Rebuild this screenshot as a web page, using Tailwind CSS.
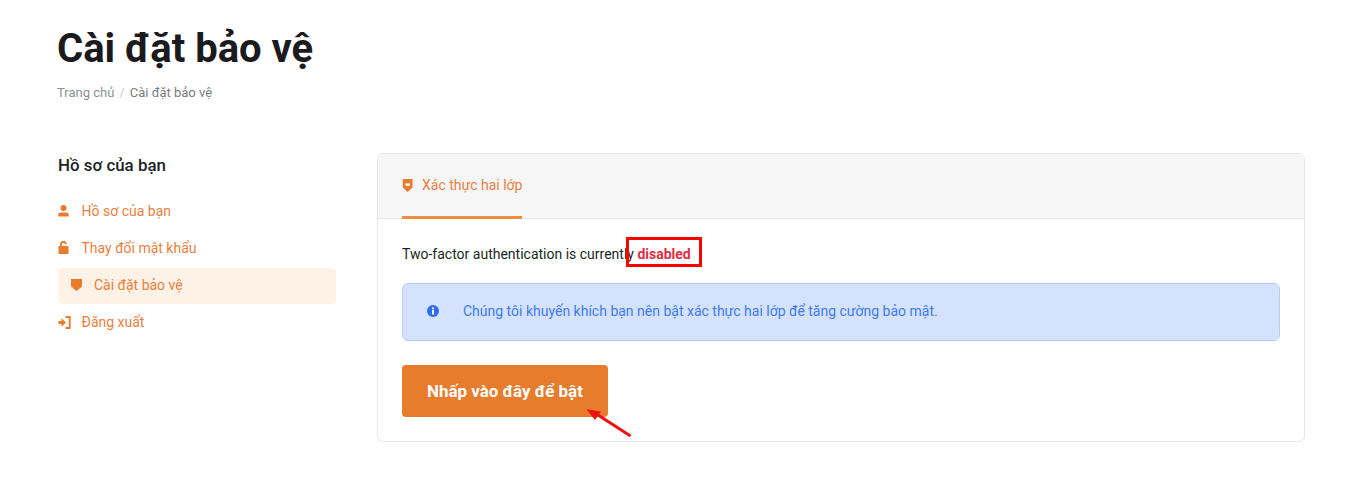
<!DOCTYPE html>
<html lang="vi">
<head>
  <meta charset="UTF-8" />
  <title>Cài đặt bảo vệ</title>
  <script src="https://cdn.jsdelivr.net/npm/@tailwindcss/browser@4"></script>
</head>
<body class="bg-white font-['Roboto',sans-serif] text-[#181c20] overflow-hidden">
  <div class="relative h-[484px] w-[1351px] pl-[57px] pr-[46px]">
    <!-- Page title -->
    <h1 class="pt-[25px] text-[40px] leading-[48px] font-bold text-[#1b1b1f]">Cài đặt bảo vệ</h1>
    <div class="mt-[10px] flex items-center text-[13px] leading-[20px] text-[#8f9096]">
      <span>Trang chủ</span>
      <span class="mx-[5px] text-[#c8c9cc]">/</span>
      <span class="text-[#7a7b80]">Cài đặt bảo vệ</span>
    </div>

    <div class="mt-[50px] flex">
      <!-- Sidebar -->
      <aside class="w-[279px] shrink-0 pl-px">
        <h2 class="pt-[2px] text-[16.9px] leading-[20px] font-medium text-[#1b1f24]">Hồ sơ của bạn</h2>
        <ul class="mt-[17px] text-[14px] leading-[20px] text-[#e97f3f]">
          <li class="flex h-[37px] items-center">
            <svg class="mr-[12.5px] w-[11px] h-[12px]" viewBox="0 0 11 12" fill="#e87c2d"><circle cx="5.5" cy="3" r="3"/><path d="M.3 11.5V9.8C.3 8.2 1.5 7.4 3 7.4h5c1.5 0 2.7.8 2.7 2.4v1.7z"/></svg>
            <span>Hồ sơ của bạn</span>
          </li>
          <li class="flex h-[37px] items-center">
            <svg class="mr-[12.5px] w-[11px] h-[13px]" viewBox="0 0 11 13" fill="#e87c2d"><path d="M.5 5h10v8H.5z"/><path d="M2.9 5.5V3.2C2.9 1.8 3.9.8 5.3.8s2.6 1 2.6 2.4" fill="none" stroke="#e87c2d" stroke-width="1.8"/></svg>
            <span>Thay đổi mật khẩu</span>
          </li>
          <li class="mt-[2px] flex h-[36px] items-center rounded-[5px] bg-[#fef1e6] pb-[3px] pl-[13px]">
            <svg class="mr-[12px] w-[11px] h-[12px]" viewBox="0 0 11 12" fill="#e87c2d"><path d="M0 0h11v7.5L5.5 12 0 7.5z"/></svg>
            <span>Cài đặt bảo vệ</span>
          </li>
          <li class="flex h-[36px] items-center">
            <svg class="mr-[10.5px] w-[13px] h-[13px]" viewBox="0 0 13 13" fill="#e87c2d"><path d="M.5 5h3V2.2L8 6.5 3.5 10.8V8H.5z"/><path d="M7.5 1h4.2v11H7.5" fill="none" stroke="#e87c2d" stroke-width="1.9"/></svg>
            <span>Đăng xuất</span>
          </li>
        </ul>
      </aside>

      <!-- Card -->
      <section class="ml-[41px] h-[289px] flex-1 rounded-[6px] border border-[#e8e8ea]">
        <div class="flex h-[65px] rounded-t-[6px] border-b border-[#e8e8ea] bg-[#f6f6f6] pl-[24px]">
          <div class="flex h-[65px] items-center border-b-[3px] border-[#f58d3d] text-[14px] text-[#e97f3f]">
            <svg class="mr-[9px] w-[11px] h-[13px]" viewBox="0 0 11 13"><path d="M.8 0h9.7v8.5L5.6 13 .8 8.5z" fill="#e87c2d"/><rect x="3.5" y="4.4" width="4.4" height="2.4" fill="#fff"/></svg>
            <span>Xác thực hai lớp</span>
          </div>
        </div>
        <div class="px-[24px]">
          <p class="pt-[25px] text-[14px] leading-[20px] text-[#1b1f24]">Two-factor authentication is currently <span class="font-bold text-[#dc2f45]">disabled</span></p>
          <div class="mt-[19px] flex h-[58px] items-center rounded-[6px] border border-[#b3cdf8] bg-[#d4e2fd] pb-[2px] pl-[24px] text-[14px] text-[#3e7bf0]">
            <svg class="mr-[24px] w-[12px] h-[12px]" viewBox="0 0 12 12"><circle cx="6" cy="6" r="6" fill="#2f6fed"/><rect x="5" y="5" width="2" height="4.5" fill="#fff"/><rect x="5" y="2.5" width="2" height="1.8" fill="#fff"/></svg>
            <span>Chúng tôi khuyến khích bạn nên bật xác thực hai lớp để tăng cường bảo mật.</span>
          </div>
          <button class="mt-[24px] h-[52px] w-[206px] rounded-[4px] bg-[#e87c2d] pt-[1px] text-[16.9px] font-bold text-white">Nhấp vào đây để bật</button>
        </div>
      </section>
    </div>

    <!-- Annotations over the screenshot -->
    <div class="absolute left-[626px] top-[237px] h-[30px] w-[76px] border-[3px] border-[#ff0000]"></div>
    <svg class="absolute left-[580px] top-[400px]" width="60" height="45" viewBox="0 0 60 45">
      <path d="M50.5 36 18 15" stroke="#ee1111" stroke-width="3" fill="none"/>
      <path d="M6.5 9.2 21 11.5 15 20z" fill="#ee1111"/>
    </svg>
  </div>
</body>
</html>
